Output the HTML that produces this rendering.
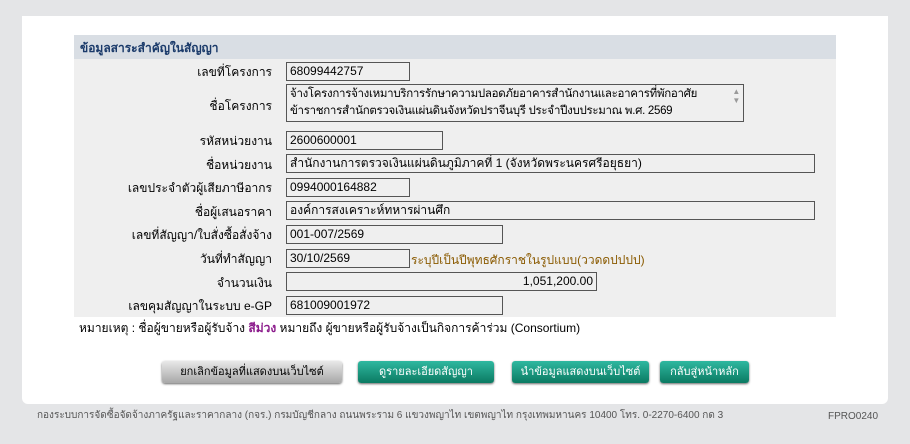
<!DOCTYPE html>
<html><head><meta charset="utf-8"><style>
*{box-sizing:border-box;margin:0;padding:0}
body{width:910px;height:444px;background:#e4e5e7;font-family:"Liberation Sans","Noto Sans CJK SC",sans-serif;font-size:12px;color:#000;position:relative;overflow:hidden}
.panel{position:absolute;left:22px;top:16px;width:866px;height:388px;background:#fff;border-radius:0 0 6px 6px}
.box{position:absolute;left:74px;top:35px;width:762px;height:282px;background:#efefef}
.hd{position:absolute;left:74px;top:35px;width:762px;height:24px;background:#d9dee4;font-weight:bold;color:#1a3a6a;padding:4px 0 0 6px;font-size:12px}
.l{position:absolute;right:638px;text-align:right;white-space:nowrap}
.i{position:absolute;left:286px;height:19px;border:1px solid #555;background:#efefef;padding:1px 3px;white-space:nowrap;overflow:hidden;font-size:12px;line-height:15px}
.b{position:absolute;top:361px;height:22px;border-radius:3px;text-align:center;line-height:22px;font-size:11px;color:#fff;background:linear-gradient(#2fb8a0,#0b7a62);box-shadow:0 1px 2px #666;white-space:nowrap}
.ft{position:absolute;top:409px;font-size:10px;color:#555;white-space:nowrap;line-height:14px}
</style></head><body>
<div class="panel"></div>
<div class="box"></div>
<div class="hd">ข้อมูลสาระสำคัญในสัญญา</div>
<div class="l" style="top:63px">เลขที่โครงการ</div><div class="i" style="top:62px;width:124px">68099442757</div>
<div class="l" style="top:97px">ชื่อโครงการ</div>
<div class="i" style="top:84px;width:458px;height:38px;white-space:normal;line-height:17px;padding-right:14px;font-size:11.5px;letter-spacing:-0.3px">จ้างโครงการจ้างเหมาบริการรักษาความปลอดภัยอาคารสำนักงานและอาคารที่พักอาศัย ข้าราชการสำนักตรวจเงินแผ่นดินจังหวัดปราจีนบุรี ประจำปีงบประมาณ พ.ศ. 2569<span style="position:absolute;right:3px;top:2px;font-size:8px;color:#999;line-height:9px">▲<br>▼</span></div>
<div class="l" style="top:132px">รหัสหน่วยงาน</div><div class="i" style="top:131px;width:157px">2600600001</div>
<div class="l" style="top:156px">ชื่อหน่วยงาน</div><div class="i" style="top:154px;width:529px">สำนักงานการตรวจเงินแผ่นดินภูมิภาคที่ 1 (จังหวัดพระนครศรีอยุธยา)</div>
<div class="l" style="top:179px">เลขประจำตัวผู้เสียภาษีอากร</div><div class="i" style="top:178px;width:124px">0994000164882</div>
<div class="l" style="top:203px">ชื่อผู้เสนอราคา</div><div class="i" style="top:201px;width:529px">องค์การสงเคราะห์ทหารผ่านศึก</div>
<div class="l" style="top:226px">เลขที่สัญญา/ใบสั่งซื้อสั่งจ้าง</div><div class="i" style="top:225px;width:217px">001-007/2569</div>
<div class="l" style="top:250px">วันที่ทำสัญญา</div><div class="i" style="top:249px;width:124px">30/10/2569</div>
<div style="position:absolute;left:411px;top:251px;color:#8a5a00">ระบุปีเป็นปีพุทธศักราชในรูปแบบ(ววดดปปปป)</div>
<div class="l" style="top:274px">จำนวนเงิน</div><div class="i" style="top:272px;width:311px;text-align:right">1,051,200.00</div>
<div class="l" style="top:297px">เลขคุมสัญญาในระบบ e-GP</div><div class="i" style="top:296px;width:217px">681009001972</div>
<div style="position:absolute;left:79px;top:319px">หมายเหตุ : ชื่อผู้ขายหรือผู้รับจ้าง <b style="color:#8b1a8b">สีม่วง</b> หมายถึง ผู้ขายหรือผู้รับจ้างเป็นกิจการค้าร่วม (Consortium)</div>
<div class="b" style="left:162px;width:180px;color:#000;background:linear-gradient(#e8e8e8,#a8a8a8)">ยกเลิกข้อมูลที่แสดงบนเว็บไซต์</div>
<div class="b" style="left:358px;width:136px">ดูรายละเอียดสัญญา</div>
<div class="b" style="left:512px;width:137px">นำข้อมูลแสดงบนเว็บไซต์</div>
<div class="b" style="left:660px;width:89px">กลับสู่หน้าหลัก</div>
<div class="ft" style="left:37px">กองระบบการจัดซื้อจัดจ้างภาครัฐและราคากลาง (กจร.) กรมบัญชีกลาง ถนนพระราม 6 แขวงพญาไท เขตพญาไท กรุงเทพมหานคร 10400 โทร. 0-2270-6400 กด 3</div>
<div class="ft" style="left:828px;top:410px">FPRO0240</div>
</body></html>
